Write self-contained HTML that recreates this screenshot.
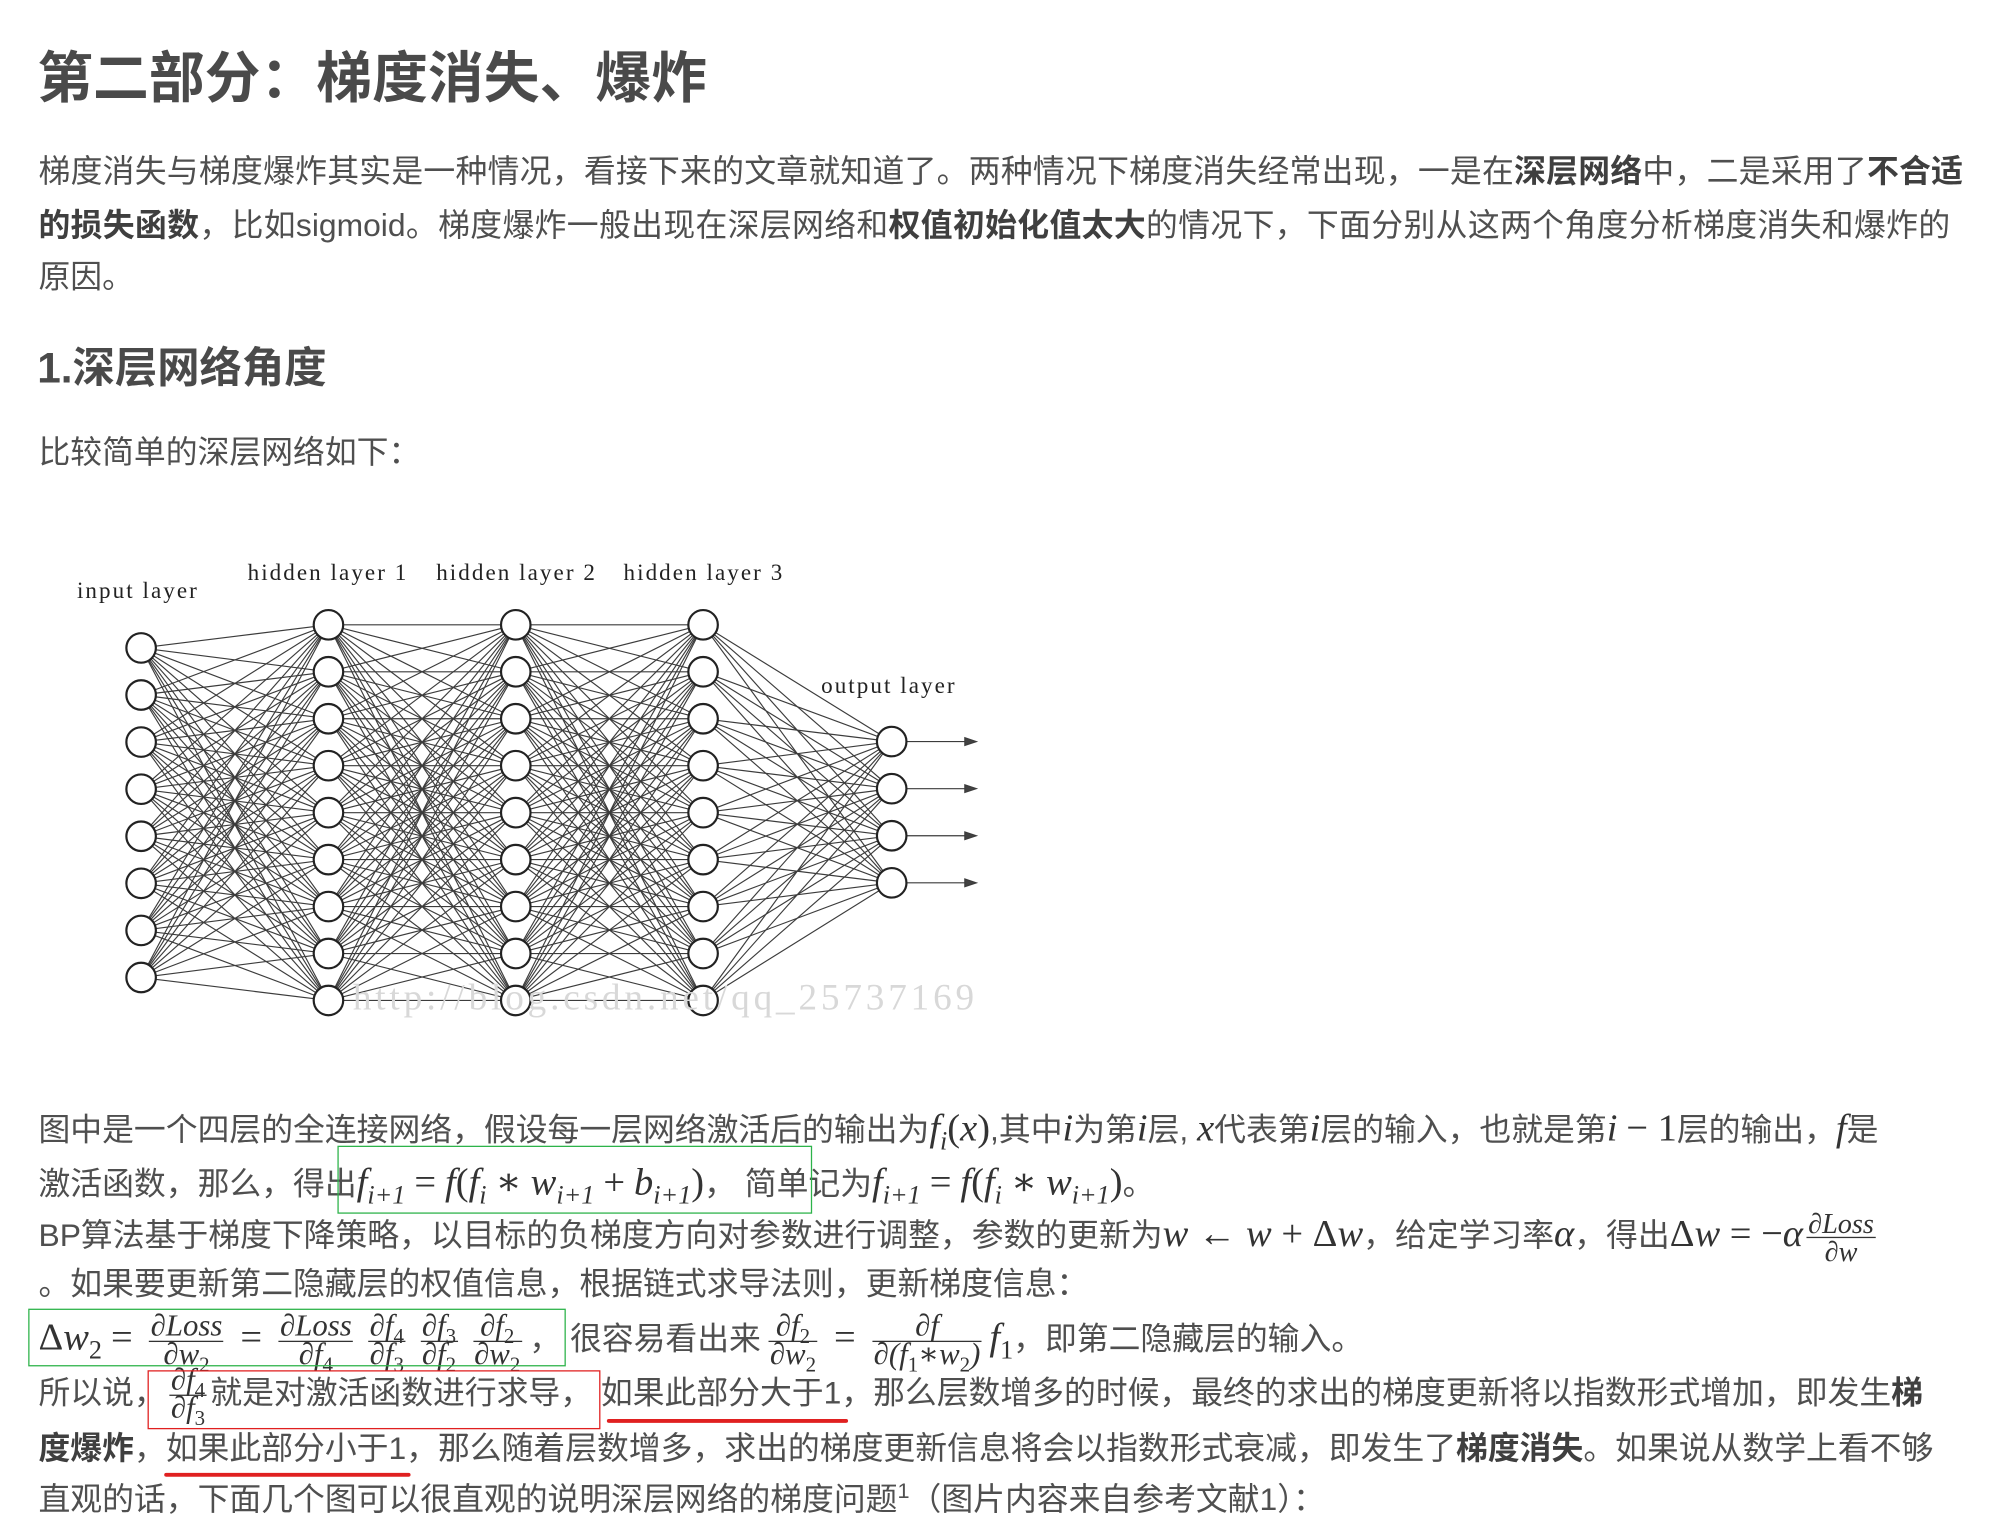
<!DOCTYPE html>
<html><head><meta charset="utf-8">
<style>
html,body{margin:0;padding:0;background:#fff;}
body{width:2002px;height:1518px;overflow:hidden;position:relative;}
#c{position:absolute;left:0;top:0;width:1561px;height:1184px;transform:scale(1.283);transform-origin:0 0;
font-family:"Liberation Sans","Noto Sans CJK SC",sans-serif;color:#4f4f4f;}
.l{position:absolute;left:30px;height:40px;line-height:40px;white-space:nowrap;font-size:24.8px;}
.j{width:1500px;text-align:justify;text-align-last:justify;white-space:normal;overflow:hidden;}
b{color:#3f3f3f;font-weight:bold;}
h1{position:absolute;left:29px;top:34px;margin:0;font-size:43.5px;line-height:56px;color:#4a4a4a;font-weight:bold;white-space:nowrap;}
h2{position:absolute;left:29px;top:266px;margin:0;font-size:33px;line-height:42px;color:#4a4a4a;font-weight:bold;white-space:nowrap;}
.m{font-family:"Liberation Serif","DejaVu Serif",serif;font-style:italic;font-size:30px;color:#333;}
.r{font-style:normal;}
.o{font-style:normal;margin:0 7px;}
sub,sup{font-size:0.68em;line-height:0;}
.fr{display:inline-block;vertical-align:middle;text-align:center;line-height:21px;font-size:22px;margin:0 3px;}
.fr>span{display:block;padding:0 1px;}
.fr>span+span{border-top:1px solid #333;}
.big .fr{font-size:24px;margin:0 4px;padding:0 2px;}
.box{position:absolute;border:1.5px solid;}
.ul{position:absolute;height:3px;background:#e02020;border-radius:2px;}
</style></head><body><div id="c">
<h1>第二部分：梯度消失、爆炸</h1>
<div class="l j" style="top:115px;width:1500px">梯度消失与梯度爆炸其实是一种情况，看接下来的文章就知道了。两种情况下梯度消失经常出现，一是在<b>深层网络</b>中，二是采用了<b>不合适</b></div>
<div class="l j" style="top:157px;width:1490px"><b>的损失函数</b>，比如sigmoid。梯度爆炸一般出现在深层网络和<b>权值初始化值太大</b>的情况下，下面分别从这两个角度分析梯度消失和爆炸的</div>
<div class="l" style="top:197px">原因。</div>
<h2>1.深层网络角度</h2>
<div class="l" style="top:334px">比较简单的深层网络如下：</div>

<svg id="net" style="position:absolute;left:0;top:0" width="1561" height="1184" viewBox="0 0 1561 1184">
<g id="ln" stroke="#1a1a1a" stroke-width="0.9" opacity="0.85"></g>
<g id="nd" fill="#fff" stroke="#222" stroke-width="1.7"></g>
<g font-family="Liberation Serif,serif" font-size="18" fill="#222" letter-spacing="1.6">
<text x="60" y="466">input layer</text>
<text x="193" y="452">hidden layer 1</text>
<text x="340" y="452">hidden layer 2</text>
<text x="486" y="452">hidden layer 3</text>
<text x="640" y="540">output layer</text>
</g>
<text x="275" y="787" font-family="Liberation Serif,serif" font-size="29" fill="#d8d8d8" letter-spacing="3">http://blog.csdn.net/qq_25737169</text>
</svg>
<script>
(function(){
var L=[],ns="http://www.w3.org/2000/svg";
function col(x,n,y0,st){var a=[];for(var i=0;i<n;i++)a.push([x,y0+i*st]);return a;}
L.push(col(110,8,505,36.7));
L.push(col(256,9,487,36.6));
L.push(col(402,9,487,36.6));
L.push(col(548,9,487,36.6));
L.push(col(695,4,578,36.7));
var ln=document.getElementById('ln'),nd=document.getElementById('nd');
for(var k=0;k<L.length-1;k++)for(var a=0;a<L[k].length;a++)for(var b=0;b<L[k+1].length;b++){
var e=document.createElementNS(ns,'line');e.setAttribute('x1',L[k][a][0]);e.setAttribute('y1',L[k][a][1]);
e.setAttribute('x2',L[k+1][b][0]);e.setAttribute('y2',L[k+1][b][1]);ln.appendChild(e);}
L[4].forEach(function(p){var e=document.createElementNS(ns,'line');e.setAttribute('x1',p[0]);e.setAttribute('y1',p[1]);
e.setAttribute('x2',758);e.setAttribute('y2',p[1]);ln.appendChild(e);
var t=document.createElementNS(ns,'path');t.setAttribute('d','M752 '+(p[1]-3)+' L761 '+p[1]+' L752 '+(p[1]+3)+'Z');t.setAttribute('fill','#222');ln.appendChild(t);});
L.forEach(function(c){c.forEach(function(p){var e=document.createElementNS(ns,'circle');e.setAttribute('cx',p[0]);e.setAttribute('cy',p[1]);e.setAttribute('r',11.5);nd.appendChild(e);});});
})();
</script>

<div class="l" style="top:860px">图中是一个四层的全连接网络，假设每一层网络激活后的输出为<span class="m">f<sub>i</sub><span class="r">(</span>x<span class="r">)</span></span>,其中<span class="m">i</span>为第<span class="m">i</span>层, <span class="m">x</span>代表第<span class="m">i</span>层的输入，也就是第<span class="m">i</span> <span class="m r">− 1</span>层的输出，<span class="m">f</span>是</div>
<div class="l" style="top:902px">激活函数，那么，得出<span class="m">f<sub>i+1</sub><span class="o">=</span>f<span class="r">(</span>f<sub>i</sub><span class="o">∗</span>w<sub>i+1</sub><span class="o">+</span>b<sub>i+1</sub><span class="r">)</span></span>，&nbsp;简单记为<span class="m">f<sub>i+1</sub><span class="o">=</span>f<span class="r">(</span>f<sub>i</sub><span class="o">∗</span>w<sub>i+1</sub><span class="r">)</span></span>。</div>
<div class="l" style="top:942px">BP算法基于梯度下降策略，以目标的负梯度方向对参数进行调整，参数的更新为<span class="m">w <span class="r">←</span> w <span class="r">+ Δ</span>w</span>，给定学习率<span class="m">α</span>，得出<span class="m"><span class="r">Δ</span>w <span class="r">= −</span>α</span><span class="fr m"><span>∂Loss</span><span>∂w</span></span></div>
<div class="l" style="top:982px">。如果要更新第二隐藏层的权值信息，根据链式求导法则，更新梯度信息：</div>
<div class="l big" style="top:1023px"><span class="m"><span class="r">Δ</span>w<sub class="r">2</sub><span class="o">=</span></span><span class="fr m"><span>∂Loss</span><span>∂w<sub class="r">2</sub></span></span><span class="m o">=</span><span class="fr m"><span>∂Loss</span><span>∂f<sub class="r">4</sub></span></span><span class="fr m"><span>∂f<sub class="r">4</sub></span><span>∂f<sub class="r">3</sub></span></span><span class="fr m"><span>∂f<sub class="r">3</sub></span><span>∂f<sub class="r">2</sub></span></span><span class="fr m"><span>∂f<sub class="r">2</sub></span><span>∂w<sub class="r">2</sub></span></span>，&nbsp;很容易看出来<span class="fr m"><span>∂f<sub class="r">2</sub></span><span>∂w<sub class="r">2</sub></span></span><span class="m o">=</span><span class="fr m"><span>∂f</span><span>∂(f<sub class="r">1</sub>∗w<sub class="r">2</sub>)</span></span><span class="m">f<sub class="r">1</sub></span>，即第二隐藏层的输入。</div>
<div class="l" style="top:1066px">所以说，<span class="fr m" style="font-size:24px"><span>∂f<sub class="r">4</sub></span><span>∂f<sub class="r">3</sub></span></span>就是对激活函数进行求导，&nbsp;如果此部分大于1，那么层数增多的时候，最终的求出的梯度更新将以指数形式增加，即发生<b>梯</b></div>
<div class="l" style="top:1110px"><b>度爆炸</b>，如果此部分小于1，那么随着层数增多，求出的梯度更新信息将会以指数形式衰减，即发生了<b>梯度消失</b>。如果说从数学上看不够</div>
<div class="l" style="top:1150px">直观的话，下面几个图可以很直观的说明深层网络的梯度问题<sup>1</sup>（图片内容来自参考文献1）：</div>

<div class="box" style="left:263px;top:893px;width:368px;height:51px;border-color:#2db34a"></div>
<div class="box" style="left:22px;top:1020px;width:417px;height:43px;border-color:#2db34a"></div>
<div class="box" style="left:115px;top:1068px;width:351px;height:44px;border-color:#e02020"></div>
<div class="ul" style="left:473px;top:1106px;width:188px"></div>
<div class="ul" style="left:128px;top:1148px;width:192px"></div>
</div></body></html>
